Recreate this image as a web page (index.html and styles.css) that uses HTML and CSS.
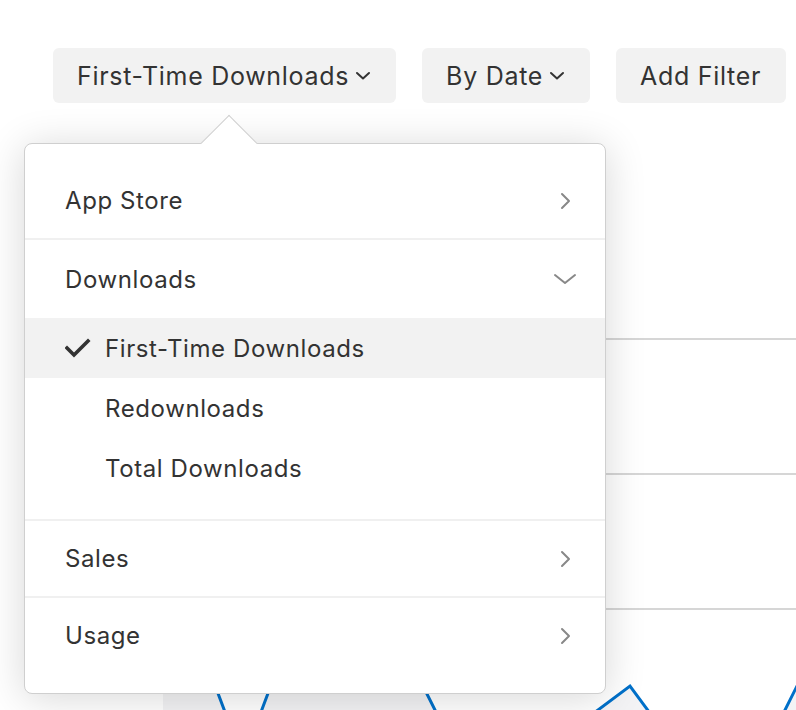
FILE: index.html
```html
<!DOCTYPE html>
<html lang="en">

<head>
    <meta charset="UTF-8">
    <meta name="viewport" content="width=device-width, initial-scale=1.0">
    <title>Metrics</title>
    <link rel="stylesheet" href="styles.css">
</head>

<body>

    <div class="toolbar">
        <button class="filtro filtro-activo">First-Time Downloads
            <svg class="flecha" width="16" height="10" viewBox="0 0 16 10"><path d="M2 2l6 5.5 6-5.5" fill="none" stroke="#333" stroke-width="2" stroke-linecap="round" stroke-linejoin="round"/></svg>
        </button>
        <button class="filtro">By Date
            <svg class="flecha" width="16" height="10" viewBox="0 0 16 10"><path d="M2 2l6 5.5 6-5.5" fill="none" stroke="#333" stroke-width="2" stroke-linecap="round" stroke-linejoin="round"/></svg>
        </button>
        <button class="filtro">Add Filter</button>
    </div>

    <!-- grafico de fondo, tapado casi entero por el menu -->
    <svg class="grafico" width="633" height="372" viewBox="0 0 633 372">
        <line x1="0" y1="1" x2="633" y2="1" stroke="#d6d6d6" stroke-width="2"/>
        <line x1="0" y1="136" x2="633" y2="136" stroke="#d6d6d6" stroke-width="2"/>
        <line x1="0" y1="271" x2="633" y2="271" stroke="#d6d6d6" stroke-width="2"/>
        <polygon points="0,352 50,342 80,422 110,342 257,342 297,422 427,378 467,348 492,382 597,422 637,342 637,372 0,372" fill="#f3f3f5"/>
        <polyline points="0,352 50,342 80,422 110,342 257,342 297,422 427,378 467,348 492,382 597,422 637,342" fill="none" stroke="#0070c9" stroke-width="3" stroke-linejoin="miter"/>
    </svg>

    <div class="menu">
        <div class="menu-flecha"></div>

        <div class="opcion">
            <span>App Store</span>
            <svg class="chevron" width="14" height="20" viewBox="0 0 14 20"><path d="M3 3l7 7-7 7" fill="none" stroke="#888" stroke-width="2" stroke-linecap="round" stroke-linejoin="round"/></svg>
        </div>
        <div class="separador"></div>

        <div class="seccion">
            <div class="opcion opcion-abierta">
                <span>Downloads</span>
                <svg class="chevron" width="24" height="14" viewBox="0 0 24 14"><path d="M2 3l10 8 10-8" fill="none" stroke="#888" stroke-width="2" stroke-linecap="round" stroke-linejoin="round"/></svg>
            </div>
            <div class="subopcion seleccionada">
                <svg class="check" width="26" height="20" viewBox="0 0 26 20"><path d="M2 10l7 7L23 3" fill="none" stroke="#333" stroke-width="3.6" stroke-linecap="square" stroke-linejoin="miter"/></svg>
                <span>First-Time Downloads</span>
            </div>
            <div class="subopcion"><span>Redownloads</span></div>
            <div class="subopcion"><span>Total Downloads</span></div>
        </div>
        <div class="separador"></div>

        <div class="opcion">
            <span>Sales</span>
            <svg class="chevron" width="14" height="20" viewBox="0 0 14 20"><path d="M3 3l7 7-7 7" fill="none" stroke="#888" stroke-width="2" stroke-linecap="round" stroke-linejoin="round"/></svg>
        </div>
        <div class="separador"></div>

        <div class="opcion">
            <span>Usage</span>
            <svg class="chevron" width="14" height="20" viewBox="0 0 14 20"><path d="M3 3l7 7-7 7" fill="none" stroke="#888" stroke-width="2" stroke-linecap="round" stroke-linejoin="round"/></svg>
        </div>
    </div>

</body>

</html>
```

FILE: styles.css
```css
body {
    font-family: Inter, "Liberation Sans", Arial, sans-serif;
    margin: 0;
    padding: 0;
    background-color: #fff;
    color: #333;
    height: 710px;
    overflow: hidden;
    position: relative;
}

.toolbar {
    display: flex;
    gap: 26px;
    padding: 48px 0 0 53px;
}

.filtro {
    display: flex;
    align-items: center;
    height: 55px;
    padding: 0 25px 0 24px;
    background-color: #f2f2f2;
    border: none;
    border-radius: 6px;
    font-family: inherit;
    font-size: 25px;
    letter-spacing: 0.7px;
    color: #333;
    cursor: pointer;
}

.filtro .flecha {
    margin-left: 6px;
}

.grafico {
    display: block;
    margin: 235px 0 0 163px;
}

.menu {
    position: absolute;
    left: 24px;
    top: 143px;
    width: 580px;
    padding: 19px 0 20px;
    background-color: #fff;
    border: 1px solid #cfcfcf;
    border-radius: 8px;
    box-shadow: 0 4px 40px rgba(0, 0, 0, 0.16);
    font-size: 24px;
    letter-spacing: 0.6px;
}

.menu-flecha {
    position: absolute;
    left: 184px;
    top: -21px;
    width: 39px;
    height: 39px;
    background-color: #fff;
    border-top: 1px solid #cfcfcf;
    border-left: 1px solid #cfcfcf;
    transform: rotate(45deg);
}

.opcion {
    display: flex;
    align-items: center;
    justify-content: space-between;
    height: 75px;
    padding: 0 32px 0 40px;
}

.opcion:first-of-type {
    height: 78px;
}

.opcion-abierta .chevron {
    margin-right: -4px;
}

.seccion {
    padding-bottom: 21px;
}

.subopcion {
    display: flex;
    align-items: center;
    height: 60px;
    padding-left: 80px;
}

.seleccionada {
    background-color: #f2f2f2;
    padding-left: 40px;
}

.check {
    margin-right: 14px;
}

.separador {
    height: 2px;
    background-color: #f0f0f0;
}
```
